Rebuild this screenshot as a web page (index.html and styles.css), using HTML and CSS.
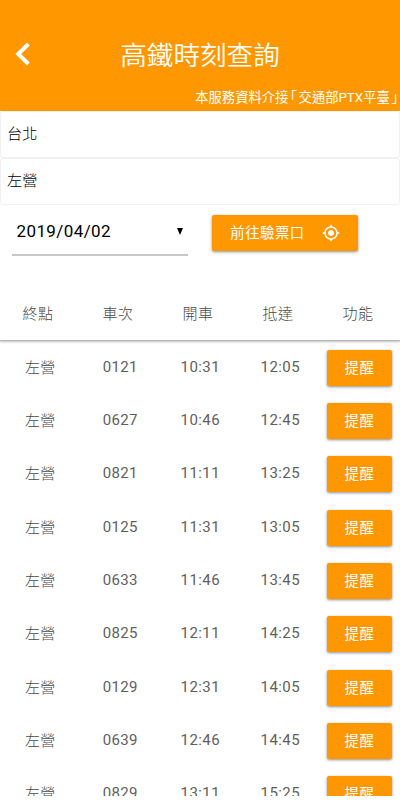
FILE: index.html
```
<!DOCTYPE html>
<html lang="zh-TW">
<head>
    <meta charset="UTF-8">
    <meta name="viewport" content="width=device-width, initial-scale=1.0">
    <title>高鐵時刻查詢</title>
    <link rel="stylesheet" href="styles.css">
</head>
<body>
    <div class="app">
        <header class="header">
            <div class="title-bar">
                <a class="back" href="#" aria-label="返回">
                    <svg width="16" height="24" viewBox="0 0 16 24"><path d="M13.4 2 L3.2 12 L13.4 22" fill="none" stroke="#fff" stroke-width="4"/></svg>
                </a>
                <h1>高鐵時刻查詢</h1>
            </div>
            <p class="source">本服務資料介接<span class="bracket">「</span>交通部PTX平臺<span class="bracket">」</span></p>
        </header>

        <div class="station">台北</div>
        <div class="station">左營</div>

        <div class="controls">
            <div class="date">
                <span>2019/04/02</span>
                <span class="arrow"></span>
            </div>
            <button class="btn gate">
                <span>前往驗票口</span>
                <svg width="18" height="18" viewBox="0 0 24 24" fill="#fff"><path d="M12 8c-2.21 0-4 1.79-4 4s1.79 4 4 4 4-1.79 4-4-1.79-4-4-4zm8.94 3c-.46-4.17-3.77-7.48-7.94-7.94V1h-2v2.06C6.83 3.52 3.52 6.83 3.06 11H1v2h2.06c.46 4.17 3.77 7.48 7.94 7.94V23h2v-2.06c4.17-.46 7.48-3.77 7.94-7.94H23v-2h-2.06zM12 19c-3.87 0-7-3.13-7-7s3.13-7 7-7 7 3.13 7 7-3.13 7-7 7z"/></svg>
            </button>
        </div>

        <div class="row table-head">
            <span>終點</span><span>車次</span><span>開車</span><span>抵達</span><span>功能</span>
        </div>
        <div id="trains"></div>
    </div>

    <script>
        const trains = [
            ['0121', '10:31', '12:05'],
            ['0627', '10:46', '12:45'],
            ['0821', '11:11', '13:25'],
            ['0125', '11:31', '13:05'],
            ['0633', '11:46', '13:45'],
            ['0825', '12:11', '14:25'],
            ['0129', '12:31', '14:05'],
            ['0639', '12:46', '14:45'],
            ['0829', '13:11', '15:25']
        ];

        const list = document.getElementById('trains');
        trains.forEach(([no, depart, arrive]) => {
            const row = document.createElement('div');
            row.className = 'row';
            row.innerHTML = `<span>左營</span><span>${no}</span><span>${depart}</span><span>${arrive}</span><button class="btn remind">提醒</button>`;
            list.appendChild(row);
        });
    </script>
</body>
</html>
```
FILE: styles.css
```
body {
    margin: 0;
    background: #fff;
    font-family: Roboto, "Noto Sans CJK TC", sans-serif;
    font-weight: 300;
    overflow: hidden;
}

.app {
    height: 796px;
    overflow: hidden;
}

.header {
    height: 111px;
    background: #ff9800;
    color: #fff;
}

.title-bar {
    display: grid;
    grid-template-columns: 46px 1fr 46px;
    align-items: center;
    height: 87px;
    padding-top: 20px;
    box-sizing: border-box;
}

.back {
    display: flex;
    padding-left: 15px;
}

h1 {
    margin: 0;
    padding-top: 5px;
    text-align: center;
    font-size: 26.6px;
    line-height: 40px;
    font-weight: 350;
}

.source {
    margin: 0;
    text-align: right;
    font-size: 13.3px;
    line-height: 22px;
    font-weight: 400;
    white-space: nowrap;
}

.bracket {
    margin: 0 1.8px;
    font-feature-settings: "halt";
}

.station {
    height: 47px;
    padding: 0 6px;
    border: 1px solid #f1f1f1;
    border-radius: 3px;
    box-sizing: border-box;
    font-size: 15.2px;
    line-height: 45px;
    color: #000;
}

.controls {
    display: flex;
    align-items: flex-start;
    gap: 24px;
    height: 82px;
    padding: 10px 12px 0;
    box-sizing: border-box;
}

.date {
    display: flex;
    justify-content: space-between;
    align-items: center;
    width: 176px;
    height: 41px;
    padding: 0 5px 7px 4.5px;
    border-bottom: 2px solid #c9c9c9;
    box-sizing: border-box;
    font-size: 17px;
    font-weight: 400;
    letter-spacing: 0.4px;
    color: #000;
}

.arrow {
    border-left: 3px solid transparent;
    border-right: 3px solid transparent;
    border-top: 7px solid #000;
}

.btn {
    display: flex;
    align-items: center;
    justify-content: center;
    height: 36px;
    padding: 0 0 3px;
    border: none;
    border-radius: 2px;
    background: #ff9800;
    box-shadow: 0 1px 3px rgba(0, 0, 0, 0.45);
    color: #fff;
    font-family: inherit;
    font-size: 14.4px;
    font-weight: 400;
    letter-spacing: 0.5px;
}

.gate {
    width: 146px;
    gap: 17px;
}

.gate svg {
    margin-top: 3px;
}

.row {
    display: grid;
    grid-template-columns: repeat(5, 80px);
    align-items: center;
    justify-items: center;
    height: 53.35px;
    font-size: 15px;
    font-weight: 400;
    letter-spacing: 0.4px;
    color: #606060;
}

.row span {
    padding: 0 0 2px 0.6px;
}

.row span:first-child,
.table-head span {
    padding-bottom: 3px;
    font-weight: 300;
    color: #4a4a4a;
}

.table-head {
    height: 54px;
    border-bottom: 1px solid #b5b5b5;
    box-shadow: 0 1px 2px rgba(0, 0, 0, 0.25);
    clip-path: inset(0 0 -4px 0);
    box-sizing: border-box;
}

.table-head span,
.table-head span:first-child {
    padding: 0 4px 2px 0;
}

.remind {
    width: 65px;
    margin-right: 1px;
}
```
